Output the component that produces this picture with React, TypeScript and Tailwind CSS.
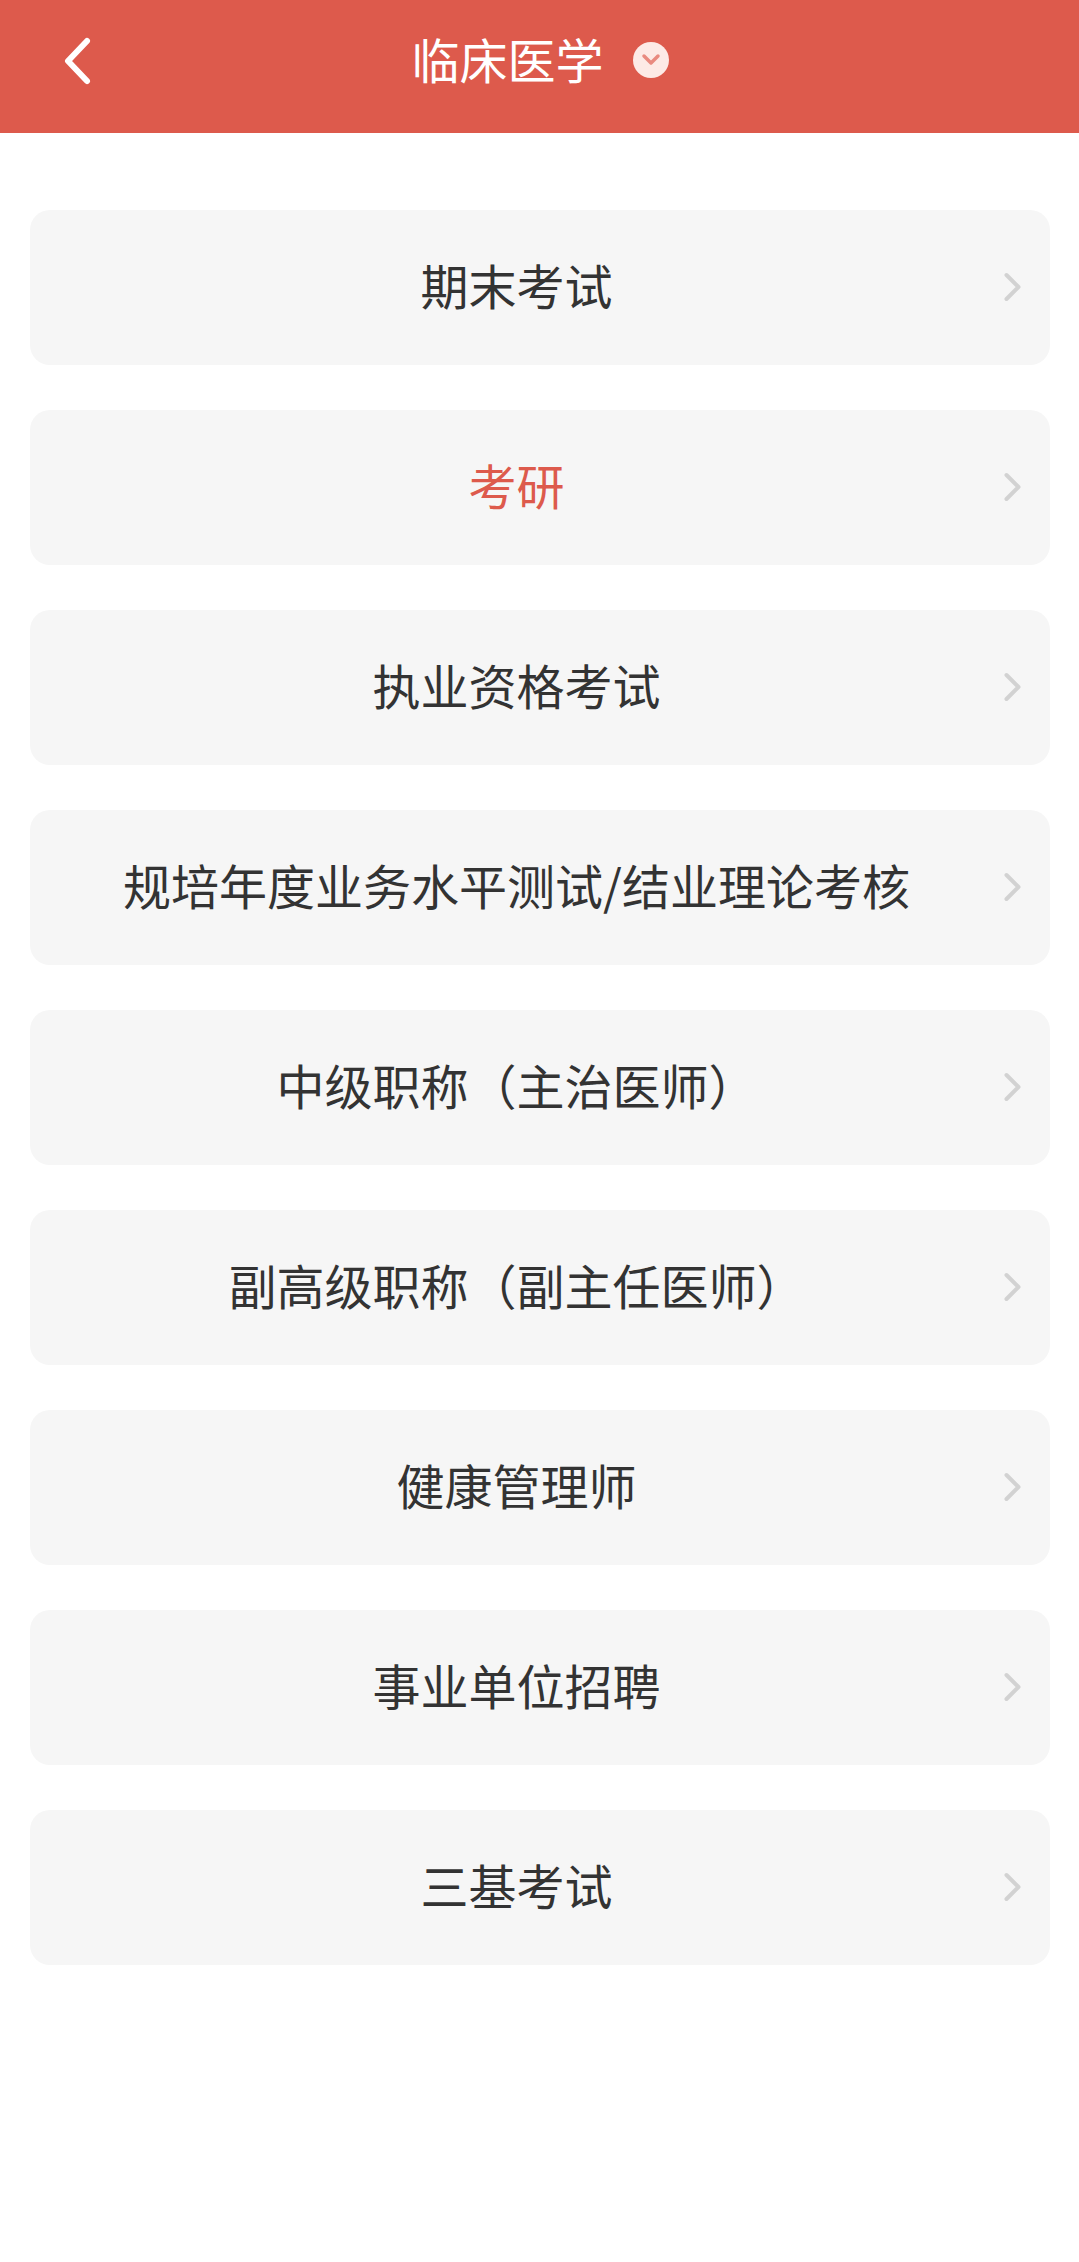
import React from 'react';

const items = [
  '期末考试',
  '考研',
  '执业资格考试',
  '规培年度业务水平测试/结业理论考核',
  '中级职称（主治医师）',
  '副高级职称（副主任医师）',
  '健康管理师',
  '事业单位招聘',
  '三基考试',
];

const fontFamily = 'font-["Noto_Sans_CJK_SC","Noto_Sans",sans-serif]';

export default function App() {
  return (
    <div className={`min-h-[2262px] bg-white ${fontFamily}`}>
      <div className="relative flex h-[133px] items-center justify-center bg-[#dd5a4c]">
        <svg
          className="absolute left-[62px] top-[36px] h-[50px] w-[30px]"
          viewBox="0 0 30 50"
          fill="none"
          stroke="white"
          strokeWidth="6"
          strokeLinecap="round"
          strokeLinejoin="round"
        >
          <path d="M25 5 L6 25 L25 45" />
        </svg>
        <div className="flex items-center pb-[14px] pl-[1px]">
          <span className="pb-[3px] text-[48px] leading-[60px] text-white">临床医学</span>
          <span className="ml-[29px] flex h-[36px] w-[36px] items-center justify-center rounded-full bg-[#fdeae6]">
            <svg
              className="h-[14px] w-[20px]"
              viewBox="0 0 20 14"
              fill="none"
              stroke="#e98a80"
              strokeWidth="3.5"
              strokeLinecap="round"
              strokeLinejoin="round"
            >
              <path d="M3 3 L10 10 L17 3" />
            </svg>
          </span>
        </div>
      </div>

      <div className="flex flex-col gap-[45px] pl-[30px] pr-[29px] pt-[77px]">
        {items.map((item, i) => (
          <div
            key={item}
            className="relative flex h-[155px] items-center justify-center rounded-[20px] bg-[#f6f6f6] pb-[8px] pr-[47px]"
          >
            <span className={`text-[48px] leading-[60px] ${i === 1 ? 'text-[#dd5a4c]' : 'text-[#333333]'}`}>
              {item}
            </span>
            <svg
              className="absolute left-[973px] top-[61px] h-[32px] w-[20px]"
              viewBox="0 0 20 32"
              fill="none"
              stroke="#d2d2d2"
              strokeWidth="4"
              strokeLinecap="round"
              strokeLinejoin="round"
            >
              <path d="M3.5 4 L15.5 16 L3.5 28" />
            </svg>
          </div>
        ))}
      </div>
    </div>
  );
}
